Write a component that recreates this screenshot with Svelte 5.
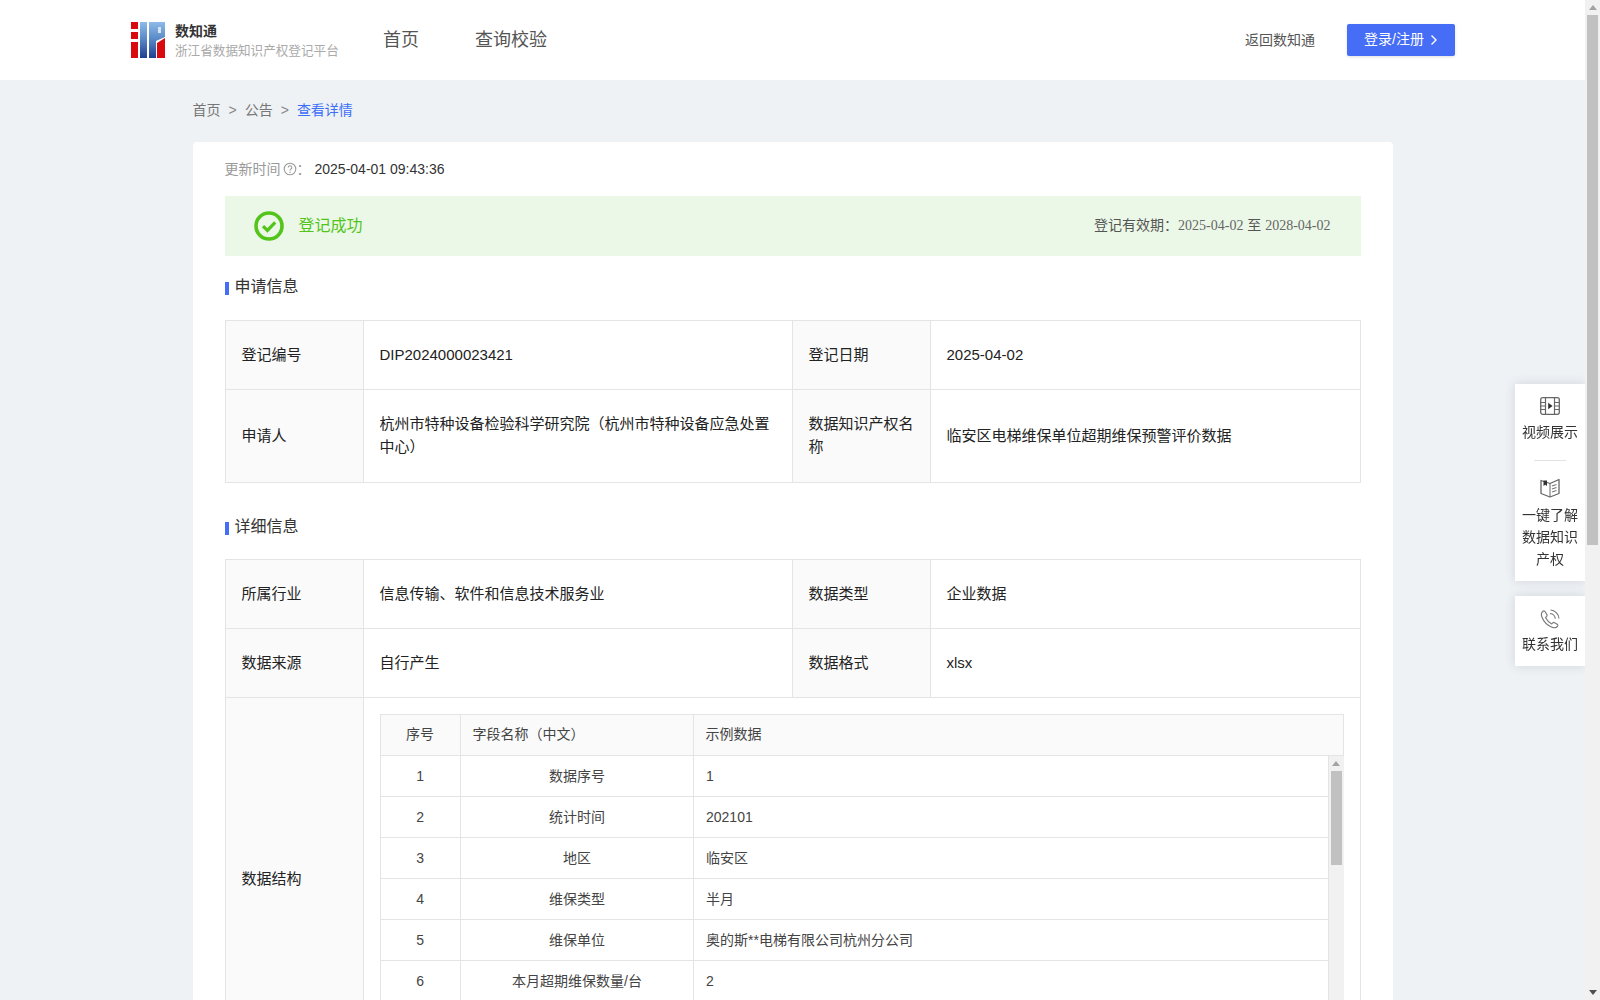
<script lang="ts">
  const fields = [
    { no: 1, name: '数据序号', sample: '1' },
    { no: 2, name: '统计时间', sample: '202101' },
    { no: 3, name: '地区', sample: '临安区' },
    { no: 4, name: '维保类型', sample: '半月' },
    { no: 5, name: '维保单位', sample: '奥的斯**电梯有限公司杭州分公司' },
    { no: 6, name: '本月超期维保数量/台', sample: '2' },
    { no: 7, name: '', sample: '' }
  ];
</script>

{#snippet scrollbar(thumbHeight: number)}
  <span class="arrow up"></span>
  <span class="thumb" style="height: {thumbHeight}px"></span>
  <span class="arrow down"></span>
{/snippet}

<div class="app">
  <header class="topbar">
    <div class="brand">
      <svg class="logo" width="34" height="36" viewBox="0 0 34 36" aria-hidden="true">
        <defs>
          <linearGradient id="blue" x1="0" y1="0" x2="0" y2="1">
            <stop offset="0" stop-color="#8fbbe8" />
            <stop offset="0.45" stop-color="#5c8cc8" />
            <stop offset="1" stop-color="#1f3f8f" />
          </linearGradient>
        </defs>
        <rect x="0" y="0" width="7" height="36" fill="#d8090f" />
        <rect x="0" y="7" width="7" height="3" fill="#fff" />
        <rect x="0" y="17" width="7" height="3" fill="#fff" />
        <rect x="9" y="0" width="7" height="36" fill="url(#blue)" />
        <path d="M18 0H34V15L25 19V36H18Z" fill="url(#blue)" />
        <rect x="27" y="5" width="3" height="6" fill="#d5e4f5" />
        <path d="M26 21L34 16V36H26Z" fill="#d8090f" />
      </svg>
      <div class="brand-text">
        <strong>数知通</strong>
        <span>浙江省数据知识产权登记平台</span>
      </div>
    </div>
    <nav class="nav">
      <a href="#home">首页</a>
      <a href="#check">查询校验</a>
    </nav>
    <div class="actions">
      <a href="#back" class="back">返回数知通</a>
      <button type="button" class="login">
        <span>登录/注册</span>
        <svg width="8" height="12" viewBox="0 0 8 12" aria-hidden="true">
          <path d="M1.5 1.5L6 6L1.5 10.5" fill="none" stroke="#fff" stroke-width="1.4" />
        </svg>
      </button>
    </div>
  </header>

  <main class="page">
    <div class="crumbs">
      <span>首页</span>
      <i>&gt;</i>
      <span>公告</span>
      <i>&gt;</i>
      <span class="current">查看详情</span>
    </div>

    <section class="card">
      <div class="updated">
        <span class="updated-label">更新时间</span>
        <svg width="14" height="14" viewBox="0 0 14 14" aria-hidden="true">
          <circle cx="7" cy="7" r="5.8" fill="none" stroke="#999" stroke-width="1.1" />
          <path d="M5.2 5.6a1.8 1.8 0 1 1 2.7 1.5c-.6.4-.9.7-.9 1.4" fill="none" stroke="#999" stroke-width="1.1" />
          <circle cx="7" cy="10.2" r=".7" fill="#999" />
        </svg>
        <span class="updated-label">：</span>
        <span class="updated-value">2025-04-01 09:43:36</span>
      </div>

      <div class="banner">
        <div class="banner-status">
          <svg width="30" height="30" viewBox="0 0 30 30" aria-hidden="true">
            <circle cx="15" cy="15" r="13" fill="none" stroke="#52c41a" stroke-width="3.6" />
            <path d="M9 15.2L13.4 19.4L21.2 11.4" fill="none" stroke="#52c41a" stroke-width="3.2" />
          </svg>
          <span>登记成功</span>
        </div>
        <div class="banner-valid">登记有效期：<em>2025-04-02</em> 至 <em>2028-04-02</em></div>
      </div>

      <h2 class="section-title">申请信息</h2>
      <table class="info">
        <colgroup>
          <col class="c-label" /><col class="c-value" /><col class="c-label" /><col />
        </colgroup>
        <tbody>
          <tr>
            <th>登记编号</th>
            <td>DIP2024000023421</td>
            <th>登记日期</th>
            <td>2025-04-02</td>
          </tr>
          <tr class="tall">
            <th>申请人</th>
            <td>杭州市特种设备检验科学研究院（杭州市特种设备应急处置中心）</td>
            <th>数据知识产权名称</th>
            <td>临安区电梯维保单位超期维保预警评价数据</td>
          </tr>
        </tbody>
      </table>

      <h2 class="section-title second">详细信息</h2>
      <table class="info">
        <colgroup>
          <col class="c-label" /><col class="c-value" /><col class="c-label" /><col />
        </colgroup>
        <tbody>
          <tr>
            <th>所属行业</th>
            <td>信息传输、软件和信息技术服务业</td>
            <th>数据类型</th>
            <td>企业数据</td>
          </tr>
          <tr>
            <th>数据来源</th>
            <td>自行产生</td>
            <th>数据格式</th>
            <td>xlsx</td>
          </tr>
          <tr>
            <th>数据结构</th>
            <td colspan="3" class="nested">
              <div class="fields">
                <table class="fields-head">
                  <colgroup><col class="f-no" /><col class="f-name" /><col /></colgroup>
                  <thead>
                    <tr>
                      <th class="center">序号</th>
                      <th>字段名称（中文）</th>
                      <th>示例数据</th>
                    </tr>
                  </thead>
                </table>
                <div class="fields-scroll">
                  <table class="fields-body">
                    <colgroup><col class="f-no" /><col class="f-name" /><col /></colgroup>
                    <tbody>
                      {#each fields as f}
                        <tr>
                          <td class="center">{f.name ? f.no : ''}</td>
                          <td class="center">{f.name}</td>
                          <td>{f.sample}</td>
                        </tr>
                      {/each}
                    </tbody>
                  </table>
                  <div class="bar inner-bar">
                    {@render scrollbar(94)}
                  </div>
                </div>
              </div>
            </td>
          </tr>
        </tbody>
      </table>
    </section>
  </main>
</div>

<aside class="side">
  <div class="side-box">
    <a href="#video" class="side-item">
      <svg width="20" height="18" viewBox="0 0 20 18" aria-hidden="true">
        <rect x=".7" y=".7" width="18.6" height="16.6" rx="2" fill="none" stroke="#666" stroke-width="1.3" />
        <path d="M5.5 1V17M14.5 1V17M1 5.5H5.5M1 9H5.5M1 12.5H5.5M14.5 5.5H19M14.5 9H19M14.5 12.5H19" fill="none" stroke="#666" stroke-width="1.2" />
        <path d="M8.2 5.8L12.6 9L8.2 12.2Z" fill="#333" />
      </svg>
      <span>视频展示</span>
    </a>
    <div class="side-divider"></div>
    <a href="#guide" class="side-item book">
      <svg width="20" height="20" viewBox="0 0 20 20" aria-hidden="true">
        <path d="M1 2.5L10 5.5L19 1.5V15.5L10 19L1 15.5Z" fill="none" stroke="#666" stroke-width="1.3" stroke-linejoin="round" />
        <path d="M10 5.5V19" stroke="#666" stroke-width="1" />
        <path d="M3.5 2.5H7V8L5.2 6.8L3.5 8Z" fill="#333" />
        <path d="M12 8L16.5 6.5M12 11L16.5 9.5M12 14L16.5 12.5" stroke="#777" stroke-width="1.1" fill="none" />
      </svg>
      <span>一键了解<br />数据知识<br />产权</span>
    </a>
  </div>
  <div class="side-box">
    <a href="#contact" class="side-item phone">
      <svg width="20" height="20" viewBox="0 0 20 20" aria-hidden="true">
        <path d="M3 2.2C1.4 3.4.9 5.6 2 8.3C3.6 12.4 7.6 16.6 12 18.2C14.5 19.1 16.6 18.6 17.6 17.1C18 16.4 17.8 15.7 17.2 15.3L14.6 13.7C14 13.3 13.3 13.4 12.8 13.9L11.8 14.9C9.4 13.7 6.7 10.9 5.5 8.5L6.6 7.4C7.1 6.9 7.2 6.3 6.9 5.7L5.2 2.7C4.7 1.9 3.8 1.7 3 2.2Z" fill="none" stroke="#777" stroke-width="1.1" />
        <path d="M10 4.5C12.8 4.7 15 6.9 15.3 9.8M10.5 1C15.1 1.3 18.6 4.8 19 9.5" fill="none" stroke="#777" stroke-width="1.1" />
      </svg>
      <span>联系我们</span>
    </a>
  </div>
</aside>

<div class="bar page-bar">
  {@render scrollbar(530)}
</div>

<style>
  :global(body) {
    background: #eef2f5;
    font-family: "Liberation Sans", "Noto Sans CJK SC", sans-serif;
    color: #333;
  }
  a {
    color: inherit;
    text-decoration: none;
  }

  .app {
    padding-right: 15px;
  }

  /* scrollbars are hidden in the headless window, so they are drawn */
  .bar {
    width: 15px;
    background: #f1f1f1;
    display: flex;
    flex-direction: column;
    align-items: center;
    box-sizing: border-box;
  }
  .page-bar {
    position: fixed;
    top: 0;
    right: 0;
    bottom: 0;
  }
  .inner-bar {
    flex: none;
  }
  .thumb {
    width: 11px;
    background: #c1c1c1;
  }
  .arrow {
    flex: none;
    width: 0;
    height: 0;
    box-sizing: content-box;
    border-left: 4.5px solid transparent;
    border-right: 4.5px solid transparent;
  }
  .up {
    margin: 5px 0;
    border-bottom: 5px solid #a3a3a3;
  }
  .down {
    margin: auto 0 5px;
    border-top: 5px solid #505050;
  }

  .topbar {
    height: 80px;
    box-sizing: border-box;
    background: #fff;
    display: flex;
    align-items: center;
    padding: 0 130px 0 131px;
  }
  .brand {
    display: flex;
    align-items: center;
    gap: 10px;
    width: 252px;
  }
  .logo {
    flex: none;
  }
  .brand-text {
    display: flex;
    flex-direction: column;
    gap: 3px;
  }
  .brand-text strong {
    font-size: 14px;
    line-height: 18px;
    font-weight: 700;
    color: #333;
  }
  .brand-text span {
    font-size: 12.6px;
    line-height: 16px;
    color: #aaa;
  }
  .nav {
    display: flex;
    gap: 56px;
    font-size: 18px;
    color: #555;
    margin-top: -4px;
  }
  .actions {
    margin-left: auto;
    display: flex;
    align-items: center;
    gap: 32px;
  }
  .back {
    font-size: 14px;
    color: #555;
    margin-top: -3px;
  }
  .login {
    width: 108px;
    height: 32px;
    background: #456df5;
    border: none;
    border-radius: 2px;
    color: #fff;
    font-family: inherit;
    font-size: 14px;
    padding: 0;
    display: flex;
    align-items: center;
    justify-content: center;
    gap: 6px;
    box-shadow: 0 1px 3px rgba(0, 0, 0, 0.12);
  }
  .login span {
    margin-top: -4px;
  }

  .page {
    width: 1200px;
    margin: 0 auto;
    min-height: 1750px;
  }
  .crumbs {
    display: flex;
    gap: 8px;
    padding: 19px 0 21px;
    font-size: 14px;
    line-height: 22px;
    color: #777;
  }
  .crumbs i {
    font-style: normal;
    color: #888;
  }
  .current {
    color: #3d6ff5;
  }

  .card {
    background: #fff;
    border-radius: 4px;
    padding: 16px 32px 32px;
  }
  .updated {
    display: flex;
    align-items: center;
    font-size: 14px;
    line-height: 22px;
  }
  .updated-label {
    color: #999;
  }
  .updated svg {
    margin-left: 2px;
  }
  .updated-value {
    margin-left: 4px;
    color: #333;
  }

  .banner {
    margin-top: 16px;
    height: 60px;
    background: #ebf8e7;
    display: flex;
    align-items: center;
    justify-content: space-between;
    padding: 0 30px 0 29px;
  }
  .banner-status {
    display: flex;
    align-items: center;
    gap: 15px;
    font-size: 16px;
    color: #52c41a;
  }
  .banner-status span {
    margin-top: -4px;
  }
  .banner-valid {
    font-size: 14px;
    color: #555;
    margin-top: -4px;
  }
  .banner-valid em {
    font-family: "Liberation Serif", serif;
    font-style: normal;
    color: #666;
  }

  .section-title {
    display: flex;
    align-items: center;
    gap: 6px;
    margin: 19px 0 21px;
    font-size: 16px;
    line-height: 24px;
    font-weight: 400;
    color: #333;
  }
  .section-title::before {
    content: "";
    width: 4px;
    height: 13px;
    margin-top: 3px;
    background: #456df5;
  }
  .second {
    margin-top: 32px;
    margin-bottom: 20px;
    gap: 6px;
  }

  .info {
    width: 100%;
    table-layout: fixed;
    border-collapse: collapse;
    font-size: 15px;
    line-height: 23px;
    color: #222;
  }
  .c-label {
    width: 138px;
  }
  .c-value {
    width: 429px;
  }
  .info > tbody > tr > th,
  .info > tbody > tr > td {
    border: 1px solid #e4e4e4;
    padding: 22px 16px 23px;
    text-align: left;
    font-weight: 400;
  }
  .info > tbody > tr.tall > th,
  .info > tbody > tr.tall > td {
    padding-bottom: 24px;
  }
  .info > tbody > tr > th {
    background: #fafafa;
  }
  .info > tbody > tr > td.nested {
    padding: 16px;
  }

  .fields {
    font-size: 14px;
    color: #444;
  }
  .fields table {
    width: 100%;
    table-layout: fixed;
    border-collapse: collapse;
  }
  .f-no {
    width: 80px;
  }
  .f-name {
    width: 233px;
  }
  .fields-head th {
    height: 39px;
    padding: 0 12px 1px;
    background: #fafafa;
    border: 1px solid #e4e4e4;
    text-align: left;
    font-weight: 400;
  }
  .fields .center {
    text-align: center;
  }
  .fields-scroll {
    display: flex;
    height: 287px;
    overflow: hidden;
    border-left: 1px solid #e4e4e4;
  }
  .fields-scroll table {
    flex: 1;
    min-width: 0;
    align-self: flex-start;
  }
  .fields-body td {
    height: 40px;
    padding: 0 12px;
    border-right: 1px solid #e4e4e4;
    border-bottom: 1px solid #e4e4e4;
  }

  .side {
    position: fixed;
    top: 384px;
    right: 15px;
    width: 70px;
    display: flex;
    flex-direction: column;
    gap: 15px;
    font-size: 14px;
    line-height: 22px;
    color: #333;
  }
  .side-box {
    background: #fff;
    box-shadow: 0 0 10px rgba(60, 70, 90, 0.16);
  }
  .side-item {
    display: flex;
    flex-direction: column;
    align-items: center;
    text-align: center;
    padding-top: 13px;
  }
  .side-item span {
    margin-top: 6px;
  }
  .side-divider {
    width: 32px;
    height: 1px;
    margin: 17px auto 0;
    background: #e2e2e2;
  }
  .book {
    padding-top: 17px;
    padding-bottom: 11px;
  }
  .phone {
    padding-top: 13px;
    padding-bottom: 11px;
  }
  .phone span {
    margin-top: 4px;
  }
</style>
